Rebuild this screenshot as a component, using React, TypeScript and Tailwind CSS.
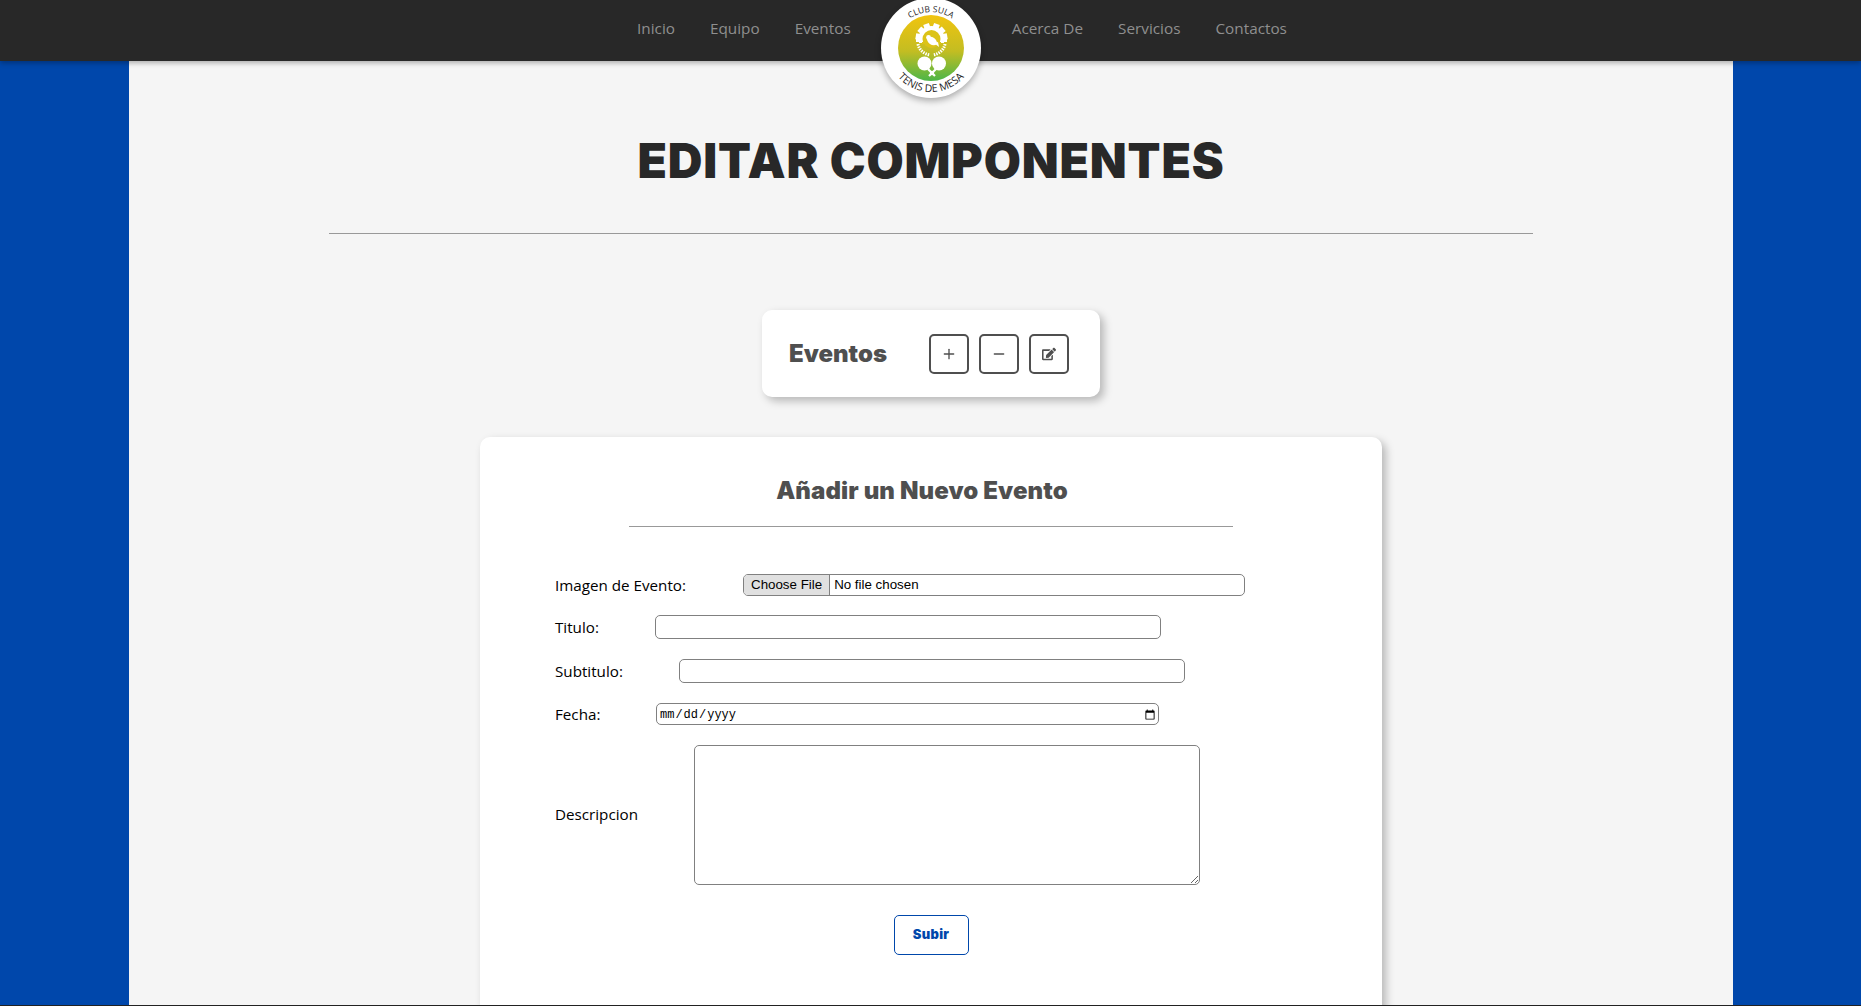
import { Plus, Minus } from "lucide-react";
import { FaEdit } from "react-icons/fa";

const heading = "font-['Inter',sans-serif] font-black";

function Logo() {
  const teeth = [-80, -50, -20, 20, 50, 80];
  return (
    <div className="absolute left-1/2 top-[-2px] z-10 size-[100px] -translate-x-1/2 rounded-full bg-white shadow-[0_3px_6px_rgba(0,0,0,0.3)]">
      <svg viewBox="0 0 100 100" className="size-[100px]">
        <defs>
          <linearGradient id="logoGrad" x1="0" y1="0" x2="0" y2="1">
            <stop offset="0" stopColor="#f1c40f" />
            <stop offset="0.55" stopColor="#c3bd22" />
            <stop offset="1" stopColor="#4cb648" />
          </linearGradient>
          <clipPath id="gearClip">
            <rect x="30" y="20" width="41" height="25" />
          </clipPath>
          <path id="arcTop" d="M14 50 A36 36 0 0 1 86 50" />
          <path id="arcBottom" d="M6 50 A44 44 0 0 0 94 50" />
        </defs>
        <circle cx="50" cy="50" r="33" fill="url(#logoGrad)" />
        {/* engranaje */}
        <g clipPath="url(#gearClip)" fill="#fff">
          <circle cx="50.5" cy="41" r="13" />
          {teeth.map((a) => (
            <rect key={a} x="47.5" y="25" width="6" height="6" transform={`rotate(${a} 50.5 41)`} />
          ))}
          <rect x="35" y="40" width="31" height="4" />
        </g>
        <circle cx="50.5" cy="41" r="9" fill="#dcc318" />
        <rect x="41" y="44" width="19" height="2" fill="#dcc318" />
        {/* pajaro */}
        <ellipse cx="51" cy="43" rx="5.5" ry="3.6" transform="rotate(35 51 43)" fill="#fff" />
        <circle cx="47.5" cy="39.5" r="2.4" fill="#fff" />
        <path d="M53 45l5 4-1-5z" fill="#fff" />
        {/* ramas */}
        <path d="M37 46c1 6 6 10 12 11" fill="none" stroke="#fff" strokeWidth="3" strokeDasharray="1.5 1" />
        <path d="M64 46c-1 6-6 10-12 11" fill="none" stroke="#fff" strokeWidth="3" strokeDasharray="1.5 1" />
        {/* raquetas */}
        <circle cx="43.5" cy="65.5" r="7" fill="#fff" />
        <circle cx="58" cy="65.5" r="7" fill="#fff" />
        <path d="M47 71l7 7M55 71l-7 7" stroke="#fff" strokeWidth="2.2" />
        <circle cx="51" cy="75" r="2.2" fill="#fff" />
        <text className="font-['Open_Sans',sans-serif]" fontSize="8.5" fill="#222">
          <textPath href="#arcTop" startOffset="50%" textAnchor="middle">CLUB SULA</textPath>
        </text>
        <text className="font-['Open_Sans',sans-serif]" fontSize="10.5" fill="#222">
          <textPath href="#arcBottom" startOffset="50%" textAnchor="middle">TENIS DE MESA</textPath>
        </text>
      </svg>
    </div>
  );
}

function NavLink({ label }: { label: string }) {
  return <a className="text-[15.3px] text-[#8f8f8f]">{label}</a>;
}

function IconButton({ children }: { children: React.ReactNode }) {
  return (
    <button type="button" className="flex size-10 items-center justify-center rounded-[5px] border-2 border-[#4f4f4f] text-[#4f4f4f]">
      {children}
    </button>
  );
}

const inputClass = "h-6 rounded-[5px] border border-[#808080] bg-white";

export default function App() {
  return (
    <div className="h-[1006px] overflow-hidden border-b border-[#222] bg-[#0047ab] font-['Open_Sans',sans-serif]">
      <nav className="relative z-10 flex h-[61px] items-start justify-center bg-[#282828] shadow-[0_2px_5px_rgba(0,0,0,0.3)]">
        <div className="flex gap-[35px] pt-[17px] pl-[63px]">
          <NavLink label="Inicio" />
          <NavLink label="Equipo" />
          <NavLink label="Eventos" />
          <div className="w-[91px]" />
          <NavLink label="Acerca De" />
          <NavLink label="Servicios" />
          <NavLink label="Contactos" />
        </div>
        <Logo />
      </nav>

      <main className="ml-[129px] h-[945px] w-[1604px] overflow-hidden bg-[#f5f5f5]">
        <h1 className={`${heading} pt-[71px] text-center text-[48px] leading-[58px] tracking-[0.85px] text-[#282828]`}>EDITAR COMPONENTES</h1>
        <hr className="mx-auto mt-[43px] w-[1204px] border-[#999]" />

        <div className="mx-auto mt-[76px] flex h-[87px] w-[338px] items-center rounded-[10px] bg-white pl-[27px] shadow-[4px_4px_8px_rgba(0,0,0,0.25)]">
          <h2 className={`${heading} w-[140px] text-[24px] text-[#4f4f4f]`}>Eventos</h2>
          <div className="flex gap-[10px]">
            <IconButton><Plus size={16} strokeWidth={2} /></IconButton>
            <IconButton><Minus size={16} strokeWidth={2} /></IconButton>
            <IconButton><FaEdit size={14} /></IconButton>
          </div>
        </div>

        <section className="mx-auto mt-[40px] h-[600px] w-[902px] rounded-[10px] bg-white px-[75px] shadow-[4px_4px_8px_rgba(0,0,0,0.25)]">
          <h3 className={`${heading} -translate-x-[9px] pt-[39px] text-center text-[24px] leading-[30px] tracking-[0.1px] text-[#4f4f4f]`}>Añadir un Nuevo Evento</h3>
          <hr className="mx-auto mt-[20px] w-[604px] border-[#999]" />

          <form className="mt-[46px] flex flex-col text-[15.2px] text-black">
            <div className="flex h-6 items-center">
              <label className="w-[188px]">Imagen de Evento:</label>
              <input type="file" className="h-[22px] w-[502px] rounded-[5px] border border-[#808080] font-['Liberation_Sans',sans-serif] text-[13.33px] file:mr-1 file:h-full file:border-0 file:border-r file:border-[#808080] file:bg-[#e0e0e0] file:px-[7px]" />
            </div>
            <div className="mt-[18px] flex items-center">
              <label className="w-[100px]">Titulo:</label>
              <input type="text" className={`${inputClass} w-[506px]`} />
            </div>
            <div className="mt-[20px] flex items-center">
              <label className="w-[124px]">Subtitulo:</label>
              <input type="text" className={`${inputClass} w-[506px]`} />
            </div>
            <div className="mt-[20px] flex items-center">
              <label className="w-[101px]">Fecha:</label>
              <input type="date" className="h-[22px] w-[503px] rounded-[5px] border border-[#808080] pt-[2px] pl-[2px] font-['Liberation_Mono',monospace] text-[12px]" />
            </div>
            <div className="mt-[19px] flex items-center">
              <label className="w-[139px]">Descripcion</label>
              <textarea className="h-[140px] w-[506px] rounded-[5px] border border-[#808080]" />
            </div>
            <button type="button" className={`${heading} mx-auto mt-[30px] h-10 w-[75px] rounded-[5px] border border-[#0047ab] text-[13px] tracking-[0.3px] text-[#0047ab]`}>Subir</button>
          </form>
        </section>
      </main>
    </div>
  );
}
